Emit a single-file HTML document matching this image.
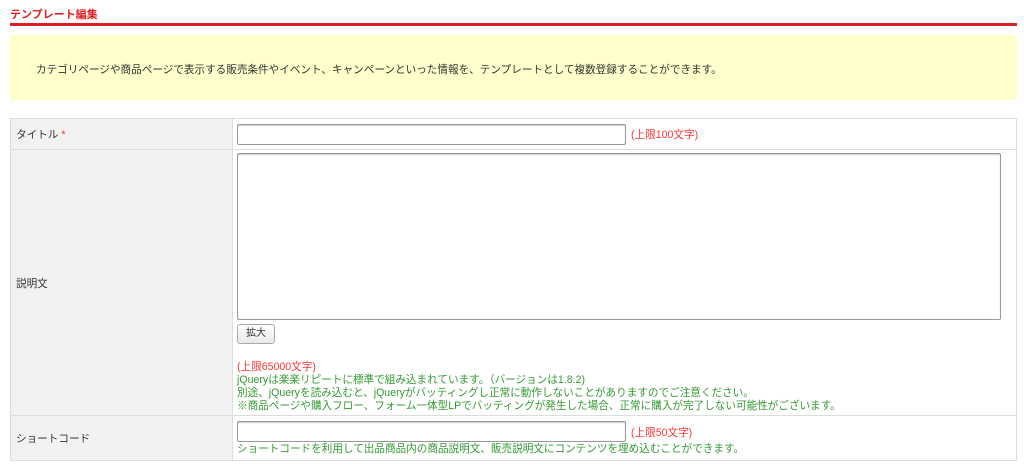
<!DOCTYPE html>
<html><head><meta charset="utf-8"><style>
body{margin:0;background:#fff;font-family:"Liberation Sans","Noto Sans CJK JP",sans-serif;font-size:10.6px;color:#333;width:1024px;height:467px;overflow:hidden;position:relative}
.a{position:absolute}
.red{color:#f33}.grn{color:#393}
.in{position:absolute;border:1px solid #999;border-radius:2px;background:#fff;box-shadow:inset 0 1px 1px #ccc}
</style></head><body>
<div class="a" style="left:10px;top:6px;color:#d22;font-weight:bold;font-size:11px">テンプレート編集</div>
<div class="a" style="left:10px;top:23px;width:1007px;height:3px;background:#d9202a"></div>
<div class="a" style="left:10px;top:35px;width:1007px;height:65px;background:#ffffcc"></div>
<div class="a" style="left:36px;top:62px">カテゴリページや商品ページで表示する販売条件やイベント、キャンペーンといった情報を、テンプレートとして複数登録することができます。</div>
<div class="a" style="left:10px;top:118px;width:1005px;height:341px;border:1px solid #ddd"></div>
<div class="a" style="left:11px;top:119px;width:221px;height:341px;background:#f2f2f2;border-right:1px solid #ddd"></div>
<div class="a" style="left:11px;top:149px;width:1005px;height:1px;background:#ddd"></div>
<div class="a" style="left:11px;top:415px;width:1005px;height:1px;background:#ddd"></div>
<div class="a" style="left:16px;top:127px">タイトル <span class="red">*</span></div>
<div class="a" style="left:16px;top:276px">説明文</div>
<div class="a" style="left:16px;top:431px">ショートコード</div>
<div class="in" style="left:237px;top:124px;width:387px;height:19px"></div>
<div class="a red" style="left:631px;top:127px">(上限100文字)</div>
<div class="in" style="left:237px;top:153px;width:762px;height:165px"></div>
<div class="a" style="left:237px;top:324px;width:36px;height:18px;border:1px solid #aaa;border-radius:3px;background:linear-gradient(#fff,#e8e8e8);text-align:center;line-height:18px;font-size:10px">拡大</div>
<div class="a" style="left:237px;top:361px;line-height:13px"><span class="red">(上限65000文字)</span><br><span class="grn">jQueryは楽楽リピートに標準で組み込まれています。（バージョンは1.8.2)<br>別途、jQueryを読み込むと、jQueryがバッティングし正常に動作しないことがありますのでご注意ください。<br>※商品ページや購入フロー、フォーム一体型LPでバッティングが発生した場合、正常に購入が完了しない可能性がございます。</span></div>
<div class="in" style="left:237px;top:421px;width:387px;height:19px"></div>
<div class="a red" style="left:631px;top:425px">(上限50文字)</div>
<div class="a grn" style="left:237px;top:441px">ショートコードを利用して出品商品内の商品説明文、販売説明文にコンテンツを埋め込むことができます。</div>
</body></html>
